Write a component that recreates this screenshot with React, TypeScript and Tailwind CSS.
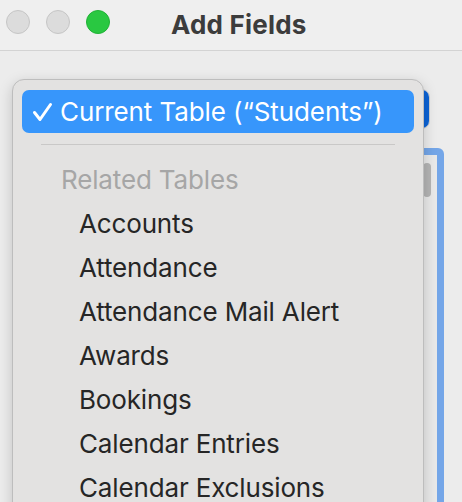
import React from 'react';

const tables = [
  'Accounts',
  'Attendance',
  'Attendance Mail Alert',
  'Awards',
  'Bookings',
  'Calendar Entries',
  'Calendar Exclusions',
];

const font = { fontFamily: 'Inter, "Noto Sans", sans-serif' };

const App: React.FC = () => {
  return (
    <div className="relative w-[462px] h-[502px] overflow-hidden bg-[#ececec]" style={font}>
      {/* title bar */}
      <div className="h-[51px] border-b border-[#d3d3d3] bg-[#efefef] relative">
        <div className="flex items-center gap-[16px] pl-[6px] pt-[10px]">
          <span className="w-[24px] h-[24px] rounded-full bg-[#dcdcdc] border border-[#c6c6c6]" />
          <span className="w-[24px] h-[24px] rounded-full bg-[#dcdcdc] border border-[#c6c6c6]" />
          <span className="w-[24px] h-[24px] rounded-full bg-[#29c841] border border-[#20b236]" />
        </div>
        <div className="absolute left-[171px] top-[5px] text-[26px] font-bold text-[#3c3c3c] tracking-[0.2px]">
          Add Fields
        </div>
      </div>

      {/* window content beneath the menu */}
      <div className="px-[16px] pt-[38px]">
        <div className="ml-[4px] mr-[16px] h-[40px] rounded-[8px] bg-white border border-[#cfcfcf] flex justify-end overflow-hidden">
          <div className="w-[10px] bg-[#0b63d6]" />
        </div>
        <div className="mt-[19px] ml-[4px] mr-[2px] h-[400px] rounded-[6px] border-[7px] border-[#74a6e8] bg-[#e9e9e9] flex justify-end pr-[6px] pt-[8px]">
          <div className="w-[8px] h-[34px] rounded-full bg-[#b4b4b4]" />
        </div>
      </div>

      {/* popup menu */}
      <div className="absolute left-[12px] top-[79px] w-[412px] h-[440px] rounded-[12px] bg-[#e3e2e1] border border-[#bdbdbd] shadow-[0_4px_14px_rgba(0,0,0,0.18)] px-[9px] pt-[10px]">
        <div className="h-[43px] rounded-[7px] bg-[#3796fb] flex items-center text-white text-[26px]">
          <span className="pl-[10px] flex items-center">
            <svg width="21" height="20" viewBox="0 0 21 20" fill="none">
              <path d="M2.5 10.5 L8 17.5 L18.5 2.5" stroke="white" strokeWidth="3" strokeLinecap="round" strokeLinejoin="round" />
            </svg>
          </span>
          <span className="pl-[7px] tracking-[-0.1px]">Current Table (“Students”)</span>
        </div>
        <div className="mx-[19px] mt-[11px] mb-[12px] h-[1px] bg-[#c9c8c7]" />
        <div className="h-[44px] flex items-center pl-[39px] text-[26px] text-[#a6a6a6] tracking-[-0.15px]">
          Related Tables
        </div>
        {tables.map((t) => (
          <div key={t} className="h-[44px] flex items-center pl-[57px] text-[26px] text-[#262626] tracking-[-0.15px]">
            {t}
          </div>
        ))}
      </div>
    </div>
  );
};

export default App;
